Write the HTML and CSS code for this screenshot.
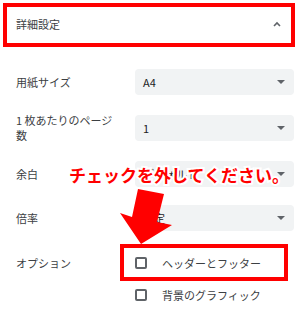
FILE: index.html
```html
<!DOCTYPE html>
<html lang="ja">
<head>
  <meta charset="UTF-8">
  <title>詳細設定</title>
  <link rel="stylesheet" href="styles.css">
</head>
<body>
  <div class="panel">
    <div class="section-head">
      <span>詳細設定</span>
      <svg class="chevron" width="8" height="6" viewBox="0 0 8 6"><path d="M1 5 L4 2 L7 5" fill="none" stroke="#5f6368" stroke-width="1.6"/></svg>
    </div>

    <div class="settings">
      <div class="row">
        <div class="label">用紙サイズ</div>
        <div class="select"><span>A4</span><span class="caret"></span></div>
      </div>
      <div class="row">
        <div class="label">1 枚あたりのページ数</div>
        <div class="select"><span>1</span><span class="caret"></span></div>
      </div>
      <div class="row margins">
        <div class="label">余白</div>
        <div class="select"><span>デフォルト</span><span class="caret"></span></div>
      </div>
      <div class="row">
        <div class="label">倍率</div>
        <div class="select"><span>既定</span><span class="caret"></span></div>
      </div>
      <div class="row options">
        <div class="label">オプション</div>
        <div class="checks">
          <label class="check"><span class="box"></span>ヘッダーとフッター</label>
          <label class="check"><span class="box"></span>背景のグラフィック</label>
        </div>
      </div>
    </div>

    <!-- annotations -->
    <div class="note">チェックを外してください。</div>
    <svg class="arrow" width="300" height="309" viewBox="0 0 300 309">
      <polygon points="138,189 164,194 157,222 172,225 141,244 120,213 132,217" fill="#ff0000"/>
    </svg>
    <div class="highlight"></div>
  </div>
</body>
</html>
```

FILE: styles.css
```css
body {
  margin: 0;
  background: #ffffff;
  font-family: "Noto Sans CJK JP", "Noto Sans", sans-serif;
  color: #3c4043;
  font-size: 11px;
}

.panel {
  position: relative;
  width: 300px;
  height: 309px;
  overflow: hidden;
}

.section-head {
  margin: 3px 5px 0 3px;
  height: 44px;
  box-sizing: border-box;
  border: 4px solid #ff0000;
  padding: 0 9px 2px 9px;
  display: flex;
  align-items: center;
  justify-content: space-between;
  font-size: 11px;
  color: #3c4043;
}

.chevron {
  margin-right: 1px;
}

.settings {
  margin-top: 22px;
  padding-left: 16px;
}

.row {
  display: flex;
  align-items: center;
  height: 26px;
  margin-bottom: 20px;
}

.row.margins {
  margin-bottom: 18px;
}

.label {
  width: 102px;
  margin-right: 17px;
  line-height: 15px;
}

.select {
  width: 159px;
  height: 26px;
  box-sizing: border-box;
  background: #f1f3f4;
  border-radius: 4px;
  padding: 0 9px 0 8px;
  display: flex;
  align-items: center;
  justify-content: space-between;
  color: #202124;
}

.caret {
  width: 0;
  height: 0;
  border-left: 4px solid transparent;
  border-right: 4px solid transparent;
  border-top: 4px solid #5f6368;
}

.options {
  height: auto;
  align-items: flex-start;
  margin-top: -4px;
}

.options .label {
  line-height: 32px;
}

.checks {
  display: flex;
  flex-direction: column;
}

.check {
  display: flex;
  align-items: center;
  height: 32px;
}

.box {
  width: 12px;
  height: 12px;
  box-sizing: border-box;
  border: 2px solid #5f6368;
  border-radius: 2px;
  margin-right: 15px;
}

.note {
  position: absolute;
  left: 69px;
  top: 164px;
  font-size: 17px;
  line-height: 22px;
  font-weight: 700;
  color: #ff0000;
  -webkit-text-stroke: 4px #ffffff;
  paint-order: stroke fill;
  white-space: nowrap;
}

.arrow {
  position: absolute;
  left: 0;
  top: 0;
}

.highlight {
  position: absolute;
  left: 120px;
  top: 244px;
  width: 168px;
  height: 37px;
  box-sizing: border-box;
  border: 4px solid #ff0000;
}
```
